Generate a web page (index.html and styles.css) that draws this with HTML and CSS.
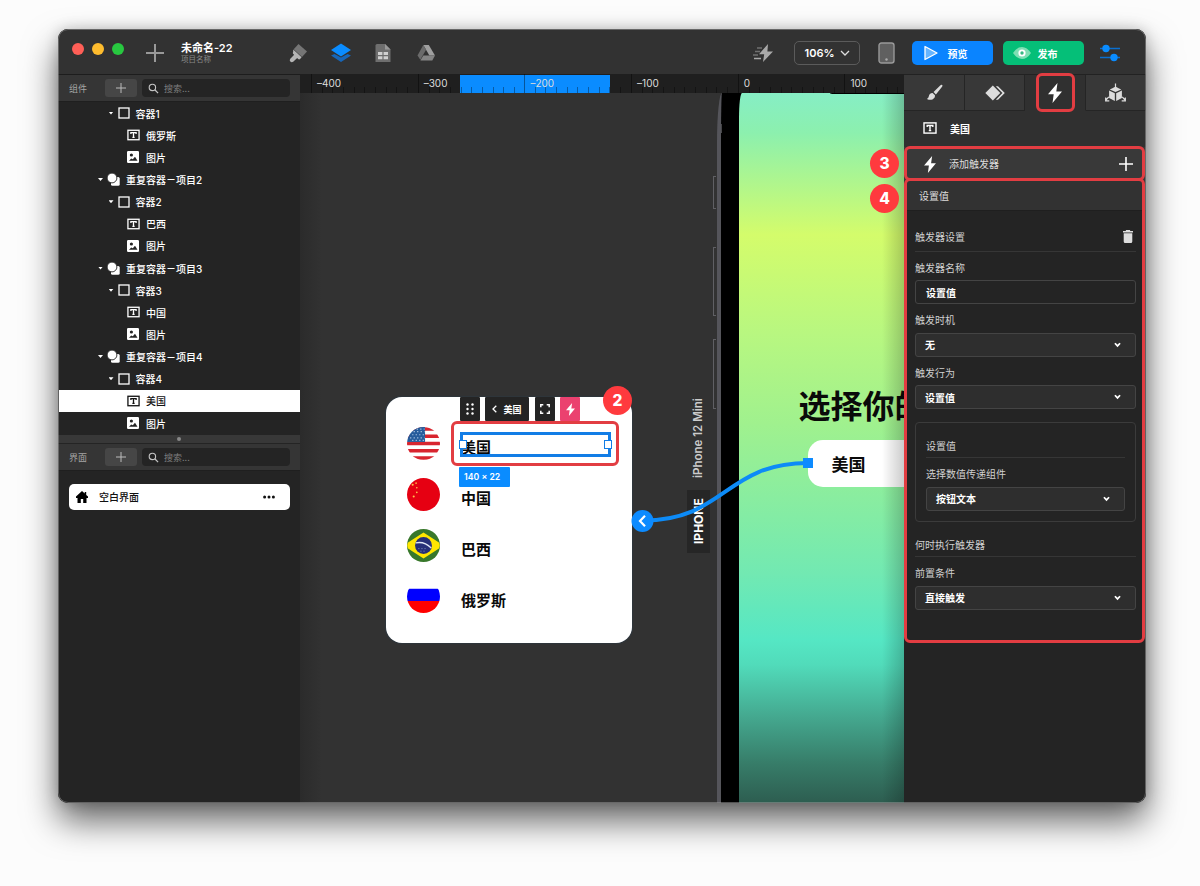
FILE: index.html
```html
<!DOCTYPE html>
<html lang="zh-CN">
<head>
    <meta charset="utf-8">
    <title>未命名-22</title>
    <link rel="stylesheet" href="styles.css">
</head>
<body>
<!-- shared icons -->
<svg class="sprite">
    <symbol id="i-box" viewBox="0 0 12 12"><rect x="1" y="1" width="10" height="10" fill="none" stroke="currentColor" stroke-width="1.3"/></symbol>
    <symbol id="i-text" viewBox="0 0 14 12"><rect x="1" y=".9" width="12" height="10.2" fill="none" stroke="currentColor" stroke-width="1.4"/><path d="M4.2 5V3.5h5.6V5M7 3.5v5M5.8 8.6h2.4" fill="none" stroke="currentColor" stroke-width="1.4"/></symbol>
    <symbol id="i-image" viewBox="0 0 12 12"><path fill="currentColor" fill-rule="evenodd" d="M1.2 0h9.6Q12 0 12 1.2v9.6Q12 12 10.8 12H1.2Q0 12 0 10.8V1.2Q0 0 1.2 0ZM4.4 2.4a1.6 1.6 0 1 0 0 3.2 1.6 1.6 0 0 0 0-3.2ZM2 9.7h8.5L8 5.7 5.8 8.2 4.2 7.4Z"/></symbol>
    <symbol id="i-repeat" viewBox="0 0 13 13"><path d="M9.5 4h1.7q1.5 0 1.5 1.5v5.7q0 1.5-1.5 1.5H5.5Q4 12.7 4 11.2V9.8" fill="currentColor"/><circle cx="5" cy="5" r="4.9" fill="currentColor" stroke="#242424" stroke-width=".9"/></symbol>
    <symbol id="i-search" viewBox="0 0 12 12"><circle cx="4.8" cy="4.8" r="3.5" fill="none" stroke="currentColor" stroke-width="1.2"/><path d="M7.4 7.4 11 11" stroke="currentColor" stroke-width="1.4"/></symbol>
    <symbol id="i-plus" viewBox="0 0 10 10"><path d="M5 0v10M0 5h10" stroke="currentColor"/></symbol>
    <symbol id="i-bolt" viewBox="0 0 14 20"><path d="M9.500 0 0 11.300h5.700L4.500 20 14 8.400H8.300Z" fill="currentColor"/></symbol>
    <symbol id="i-down" viewBox="0 0 6 5"><path d="m.8 1 2.200 2.300L5.200 1" fill="none" stroke="currentColor" stroke-width="1.500"/></symbol>
</svg>

<div class="window">
    <div class="titlebar">
        <div class="lights"><i class="red"></i><i class="yellow"></i><i class="green"></i></div>
        <svg class="new" width="18" height="18" viewBox="0 0 18 18"><path d="M9 0v18M0 9h18" stroke="#999" stroke-width="2"/></svg>
        <div class="project">
            <b>未命名-22</b>
            <span>项目名称</span>
        </div>
        <div class="tools">
            <svg width="20" height="20" viewBox="0 0 20 20"><path d="M10.500 1 19 8.500l-5 5.400-8.300-7.700Z" fill="#757575"/><path d="m5.300 6.500 8.300 7.700-1.500 1.800q-1 .8-2-.1l-.9-.9-4 3.800q-1.600 1-2.900-.2-1.200-1.400 0-2.900l3.900-3.900-1-.9q-.8-1-.1-1.900Z" fill="#b5b5b5"/></svg>
            <svg width="20" height="20" viewBox="0 0 20 20"><path d="M0 12.500 3.500 11 10 14.500 16.500 11 20 12.500 10 19Z" fill="#1766b8"/><path d="m10 .5 10 6.500-10 6.500L0 7Z" fill="#0a8cff"/></svg>
            <svg width="20" height="20" viewBox="0 0 20 20"><path d="M4 1h8l5.500 5.500V19H2.500V2.500Q2.500 1 4 1Z" fill="#6e6e6e"/><path d="M12 1v5.500h5.500Z" fill="#999"/><path d="M5 9h4.400v3H5zM10.600 9H15v3h-4.400zM5 13.200h4.400v3H5zM10.600 13.200H15v3h-4.400z" fill="#d0d0d0"/></svg>
            <svg width="20" height="20" viewBox="0 0 20 20"><path d="M7.300 2h5.500l6.200 10.600h-5.600Z" fill="#a0a0a0"/><path d="m7.300 2 2.800 4.800-5.800 10L1.500 12.500Z" fill="#6b6b6b"/><path d="M7.300 12.600H19L16.300 17.500H4.400Z" fill="#858585"/></svg>
        </div>
        <svg class="flash" width="22" height="20" viewBox="0 0 22 20"><path d="M16 1 7 11.300h5.200L11 19l10-10.600h-5.600Z" fill="#a9a9a9"/><path d="M5 5h5M3 8.500h5M1 12h5" stroke="#707070" stroke-width="1.500"/><path d="M2 15.500h7" stroke="#a9a9a9" stroke-width="1.500"/></svg>
        <div class="zoom">106% <svg width="10" height="6" viewBox="0 0 10 6"><path d="m1 1 4 4 4-4" fill="none" stroke="#ddd" stroke-width="1.300"/></svg></div>
        <svg class="device" width="17" height="22" viewBox="0 0 17 22"><rect x="1" y="1" width="15" height="20" rx="2.500" fill="#606060" stroke="#999" stroke-width="1.400"/><circle cx="8.500" cy="17.500" r="1.200" fill="#aaa"/></svg>
        <div class="btn preview"><svg width="14" height="16" viewBox="0 0 14 16"><path d="M1 1.500v13L13 8Z" fill="#66b5ff" stroke="#fff" stroke-width="1.300" stroke-linejoin="round"/></svg>预览</div>
        <div class="btn publish"><svg width="18" height="12" viewBox="0 0 18 12"><path d="M0 6Q4 0 9 0t9 6q-4 6-9 6T0 6Z" fill="#7edfb4"/><circle cx="9" cy="6" r="3.600" fill="#fff"/><circle cx="9" cy="6" r="1.700" fill="#35b982"/></svg>发布</div>
        <svg class="sliders" width="20" height="18" viewBox="0 0 20 18"><path d="M0 4.500h20M0 13.500h20" stroke="#0a6fd0" stroke-width="1.400"/><circle cx="6" cy="4.500" r="3.700" fill="#0a8cff"/><circle cx="14" cy="13.500" r="3.700" fill="#0a8cff"/></svg>
    </div>

    <div class="workspace">
        <div class="sidebar">
            <div class="side-head">
                <span>组件</span>
                <div class="add"><svg><use href="#i-plus"/></svg></div>
                <div class="search"><svg><use href="#i-search"/></svg>搜索...</div>
            </div>
            <div class="tree">
                <div class="row l2"><i class="caret"></i><svg class="box"><use href="#i-box"/></svg>容器1</div>
                <div class="row l3"><svg class="text"><use href="#i-text"/></svg>俄罗斯</div>
                <div class="row l3"><svg class="image"><use href="#i-image"/></svg>图片</div>
                <div class="row l1"><i class="caret"></i><svg class="repeat"><use href="#i-repeat"/></svg>重复容器<em>–</em>项目2</div>
                <div class="row l2"><i class="caret"></i><svg class="box"><use href="#i-box"/></svg>容器2</div>
                <div class="row l3"><svg class="text"><use href="#i-text"/></svg>巴西</div>
                <div class="row l3"><svg class="image"><use href="#i-image"/></svg>图片</div>
                <div class="row l1"><i class="caret"></i><svg class="repeat"><use href="#i-repeat"/></svg>重复容器<em>–</em>项目3</div>
                <div class="row l2"><i class="caret"></i><svg class="box"><use href="#i-box"/></svg>容器3</div>
                <div class="row l3"><svg class="text"><use href="#i-text"/></svg>中国</div>
                <div class="row l3"><svg class="image"><use href="#i-image"/></svg>图片</div>
                <div class="row l1"><i class="caret"></i><svg class="repeat"><use href="#i-repeat"/></svg>重复容器<em>–</em>项目4</div>
                <div class="row l2"><i class="caret"></i><svg class="box"><use href="#i-box"/></svg>容器4</div>
                <div class="row l3 selected"><svg class="text"><use href="#i-text"/></svg>美国</div>
                <div class="row l3"><svg class="image"><use href="#i-image"/></svg>图片</div>
            </div>
            <div class="splitter"><i></i></div>
            <div class="side-head">
                <span>界面</span>
                <div class="add"><svg><use href="#i-plus"/></svg></div>
                <div class="search"><svg><use href="#i-search"/></svg>搜索...</div>
            </div>
            <div class="screen-item">
                <svg width="12" height="12" viewBox="0 0 12 12"><path d="M6 0 0 5.500V7h1.500v5h3.300V8h2.400v4h3.300V7H12V5.500L10.200 3.900V1H8.700v1.500Z" fill="#000"/></svg>
                <span>空白界面</span>
                <svg width="12" height="4" viewBox="0 0 12 4"><g fill="#111"><circle cx="1.600" cy="2" r="1.500"/><circle cx="6" cy="2" r="1.500"/><circle cx="10.400" cy="2" r="1.500"/></g></svg>
            </div>
        </div>

        <div class="stage">
            <div class="ruler">
                <div class="range"></div>
                <div class="marks"><span>–400</span><span>–300</span><span>–200</span><span>–100</span><span>0</span><span>100</span></div>
            </div>
            <div class="canvas">
                <div class="phone">
                    <i class="band"></i>
                    <div class="screen">
                        <i class="notch"></i>
                        <h1>选择你的</h1>
                        <div class="phone-btn">美国</div>
                    </div>
                </div>
                <i class="key k1"></i><i class="key k2"></i><i class="key k3"></i>
                <div class="model">iPhone 12 Mini</div>
                <div class="tag">IPHONE</div>
                <div class="shade"></div>

                <div class="card">
                    <div class="country">
                        <svg class="flag" viewBox="0 0 32 32">
                            <clipPath id="round"><circle cx="16" cy="16" r="16"/></clipPath>
                            <g clip-path="url(#round)"><rect width="32" height="32" fill="#fff"/><path d="M0 2h32M0 9h32M0 16h32M0 23h32M0 30h32" stroke="#d8252f" stroke-width="3.500"/><rect width="17.500" height="14.500" fill="#265c9c"/><path d="M3 4.500h14M5 7.500h12M3 10.500h14M5 13h12M6 2h11" stroke="#a9c4e2" stroke-width="1.100" stroke-dasharray="1.200 2.200"/></g>
                        </svg><span>美国</span>
                    </div>
                    <div class="country">
                        <svg class="flag" viewBox="0 0 32 32"><circle cx="16" cy="16" r="16" fill="#e60012"/><g fill="#ffc34d"><circle cx="5.500" cy="6.500" r="1"/><circle cx="8.800" cy="5" r=".8"/><circle cx="9.500" cy="9.500" r=".8"/><circle cx="9.500" cy="14" r=".8"/><circle cx="6.500" cy="18" r="1"/></g></svg><span>中国</span>
                    </div>
                    <div class="country">
                        <svg class="flag" viewBox="0 0 32 32"><circle cx="16" cy="16" r="16" fill="#38782b"/><path d="M16 3.500 31 13q1.500 3 0 6L16 28.500 1 19q-1.500-3 0-6Z" fill="#ffe600"/><circle cx="16" cy="16" r="8.200" fill="#263078"/><path d="M8.500 13.500q8-2 15 5" fill="none" stroke="#dfe7f4" stroke-width="1.300"/><path d="M11 19h9M13 21.500h6" stroke="#8fa0cc" stroke-width=".8" stroke-dasharray="1 2"/></svg><span>巴西</span>
                    </div>
                    <div class="country">
                        <svg class="flag" viewBox="0 0 32 32"><g clip-path="url(#round)"><rect width="32" height="32" fill="#fff"/><rect y="8.500" width="32" height="12" fill="#00f"/><rect y="20.300" width="32" height="12" fill="#f00"/></g></svg><span>俄罗斯</span>
                    </div>
                </div>

                <!-- selection controls -->
                <div class="bar">
                    <div class="chip"><svg width="8" height="12" viewBox="0 0 8 12"><g fill="#fff"><circle cx="1.500" cy="1.500" r="1.200"/><circle cx="6.500" cy="1.500" r="1.200"/><circle cx="1.500" cy="6" r="1.200"/><circle cx="6.500" cy="6" r="1.200"/><circle cx="1.500" cy="10.500" r="1.200"/><circle cx="6.500" cy="10.500" r="1.200"/></g></svg></div>
                    <div class="chip name"><svg width="5" height="8" viewBox="0 0 5 8"><path d="M4.300.7 1 4l3.300 3.300" fill="none" stroke="#fff" stroke-width="1.300"/></svg>美国</div>
                    <div class="chip"><svg width="10" height="10" viewBox="0 0 10 10"><path d="M.8 3.300V.8h2.500M6.700.8h2.500v2.500M9.200 6.700v2.500H6.700M3.300 9.200H.8V6.700" fill="none" stroke="#fff" stroke-width="1.500"/></svg></div>
                    <div class="chip pink"><svg width="9" height="13"><use href="#i-bolt"/></svg></div>
                </div>
                <div class="selection"><i></i><i></i></div>
                <div class="size">140 × 22</div>
                <svg class="wire" width="190" height="96" viewBox="0 0 190 96">
                    <path d="M178 23C95 23 95 80.500 13 80.500" fill="none" stroke="#0d8bf7" stroke-width="4"/>
                    <rect x="173" y="18" width="10" height="10" fill="#0d8bff"/>
                    <circle cx="12.500" cy="81" r="11" fill="#0d8bff"/>
                    <path d="m15 75.800-5 5.200 5 5.200" fill="none" stroke="#fff" stroke-width="2.200"/>
                </svg>
                <div class="frame pick"></div>
                <div class="num n2">2</div>
                <div class="num n3">3</div>
                <div class="num n4">4</div>
            </div>
        </div>

        <div class="inspector">
            <div class="tabs">
                <div class="tab"><svg width="17" height="17" viewBox="0 0 18 18"><path d="M17 .8q.8.800.200 1.800L10.500 11 8 8.500l7.300-7.200q.900-.9 1.700-.5ZM7 9.500l2.500 2.500q.3 3-2.700 4.300Q4 17.300 1 15.800q1.800-.8 2-2.800.3-3.300 4-3.500Z" fill="#ddd"/></svg></div>
                <div class="tab"><svg width="20" height="16" viewBox="0 0 20 16"><path d="M7.800.5 15.300 8l-7.500 7.500L.3 8Z" fill="#ddd"/><path d="M10.800 1.200h2.200L19.800 8 13 14.800h-2.200L17.400 8Z" fill="#ddd"/></svg></div>
                <div class="tab active"><svg width="14" height="20"><use href="#i-bolt"/></svg><i class="frame"></i></div>
                <div class="tab"><svg width="21" height="20" viewBox="0 0 22 20"><path d="M11 3.500 17 6.300 11 9 5 6.300ZM4.300 7.500l6 2.800v8.200l-6-3.300ZM17.700 7.500l-6 2.800v8.200l6-3.300Z" fill="#ddd"/><path d="M11 0v6M9.200 4.500 11 6.500l1.800-2M4 14l-3.300 3.600m0-3v3.600h3.800M18 14l3.300 3.600m0-3v3.600h-3.800" fill="none" stroke="#ddd" stroke-width="1.300"/></svg></div>
            </div>
            <div class="target"><svg width="14" height="12"><use href="#i-text"/></svg>美国</div>
            <div class="trigger-add"><svg width="12" height="17"><use href="#i-bolt"/></svg><span>添加触发器</span><svg width="14" height="14" viewBox="0 0 14 14"><path d="M7 0v14M0 7h14" stroke="#fff" stroke-width="1.600"/></svg><i class="frame"></i></div>
            <div class="trigger">
                <i class="frame"></i>
                <div class="trigger-name">设置值</div>
                <div class="form">
                    <div class="section first">触发器设置<svg width="10" height="13" viewBox="0 0 10 13"><path d="M3.200 0h3.600l.6 1H10v1.500H0V1h2.600ZM.7 3.300h8.600v8.200q0 1.500-1.500 1.500H2.200Q.7 13 .7 11.500Z" fill="#ddd"/></svg></div>
                    <label>触发器名称</label>
                    <div class="input">设置值</div>
                    <label>触发时机</label>
                    <div class="select">无<svg><use href="#i-down"/></svg></div>
                    <label>触发行为</label>
                    <div class="select">设置值<svg><use href="#i-down"/></svg></div>
                    <div class="group">
                        <div class="section">设置值</div>
                        <label>选择数值传递组件</label>
                        <div class="select">按钮文本<svg><use href="#i-down"/></svg></div>
                    </div>
                    <div class="section">何时执行触发器</div>
                    <label>前置条件</label>
                    <div class="select">直接触发<svg><use href="#i-down"/></svg></div>
                </div>
            </div>
        </div>
    </div>
</div>
</body>
</html>
```

FILE: styles.css
```css
* {
    box-sizing: border-box;
}
body {
    margin: 0;
    height: 886px;
    overflow: hidden;
    background-color: #fcfcfc;
    font-family: Inter, "Noto Sans CJK SC", sans-serif;
    font-size: 10px;
    color: #fff;
}
svg {
    display: block;
    flex: none;
}
.sprite {
    position: absolute;
    width: 0;
    height: 0;
}
.window {
    position: relative;
    width: 1088px;
    height: 774px;
    margin: 29px 0 0 58px;
    border-radius: 10px;
    overflow: hidden;
    background-color: #242424;
    box-shadow: 0 18px 34px rgba(0, 0, 0, 0.6), 0 0 14px rgba(0, 0, 0, 0.18);
}
/* thin light edge over everything in the window */
.window::after {
    content: "";
    position: absolute;
    inset: 0;
    border: 1px solid rgba(150, 150, 150, 0.55);
    border-radius: 10px;
    pointer-events: none;
}

/* title bar */
.titlebar {
    display: flex;
    align-items: center;
    height: 45px;
    padding: 3px 0 0 14px;
    background-color: #323232;
}
.lights {
    display: flex;
    gap: 8px;
    margin-top: -8px;
}
.lights i {
    width: 12px;
    height: 12px;
    border-radius: 50%;
}
.red { background-color: #ff5f57; }
.yellow { background-color: #febc2e; }
.green { background-color: #28c840; }
.new {
    margin-left: 22px;
}
.project {
    width: 107px;
    margin: -2px 0 0 17px;
}
.project b {
    display: block;
    font-size: 11px;
    line-height: 14px;
    font-weight: 600;
}
.project span {
    display: block;
    margin-top: 1px;
    font-size: 7.5px;
    line-height: 8px;
    color: #8a8a8a;
}
.tools {
    display: flex;
    gap: 22.5px;
}
.flash {
    margin-left: 316px;
}
.zoom {
    display: flex;
    align-items: center;
    justify-content: space-between;
    width: 66px;
    height: 24px;
    margin-left: 20px;
    padding: 0 9px 0 10px;
    border: 1px solid #5b5b5b;
    border-radius: 5px;
    font-size: 11px;
    font-weight: 600;
}
.device {
    margin-left: 18px;
}
.btn {
    display: flex;
    align-items: center;
    height: 24px;
    width: 81px;
    border-radius: 5px;
    font-weight: 700;
}
.preview {
    gap: 10px;
    margin-left: 17px;
    padding-left: 12px;
    background-color: #0a84ff;
}
.publish {
    gap: 7px;
    margin-left: 10px;
    padding-left: 10px;
    background-color: #05bf78;
}
.sliders {
    margin-left: 16px;
}

.workspace {
    display: grid;
    grid-template-columns: 242px 604px 242px;
    height: 729px;
}

/* left side */
.sidebar {
    border-top: 1px solid #1d1d1d;
    background-color: #242424;
}
.side-head {
    display: flex;
    align-items: center;
    height: 27px;
    padding: 0 10px 0 11px;
    background-color: #353535;
    border-bottom: 1px solid #1f1f1f;
    font-size: 9px;
    color: #a5a5a5;
}
.side-head span {
    width: 36px;
}
.add {
    display: flex;
    align-items: center;
    justify-content: center;
    width: 32px;
    height: 18px;
    border-radius: 3px;
    background-color: #464646;
    color: #bbb;
}
.add svg {
    width: 10px;
    height: 10px;
}
.search {
    display: flex;
    align-items: center;
    flex: 1;
    gap: 5px;
    height: 18px;
    margin-left: 5px;
    padding-left: 6px;
    border-radius: 4px;
    background-color: #242424;
    color: #7d7d7d;
}
.search svg {
    width: 11px;
    height: 11px;
    color: #c4c4c4;
}
.tree {
    height: 333px;
}
.row {
    display: flex;
    align-items: center;
    height: 22.15px;
    margin-left: 1px;
    font-weight: 500;
}
.row svg {
    width: 12px;
    height: 12px;
    margin-right: 6px;
}
.row em {
    width: 10px;
    font-style: normal;
    text-align: center;
    transform: scaleX(1.4);
}
.l1 { padding-left: 39px; }
.l2 { padding-left: 49.5px; }
.l3 { padding-left: 68px; }
.row svg.repeat {
    width: 13px;
    height: 13px;
}
.row svg.text {
    width: 13px;
}
.l3 svg.image {
    margin-right: 7px;
}
.caret {
    width: 5px;
    height: 3px;
    margin-right: 4px;
    background-color: #fff;
    clip-path: polygon(0 0, 100% 0, 50% 100%);
}
.selected {
    background-color: #fff;
    color: #111;
}
.splitter {
    display: flex;
    align-items: center;
    justify-content: center;
    height: 9px;
    background-color: #383838;
    border-bottom: 1px solid #242424;
}
.splitter i {
    width: 4px;
    height: 4px;
    border-radius: 50%;
    background-color: #888;
}
.screen-item {
    display: flex;
    align-items: center;
    height: 26px;
    margin: 13px 10px 0 11px;
    padding: 0 15px 0 7px;
    border-radius: 5px;
    background-color: #fff;
    color: #111;
    font-weight: 500;
}
.screen-item span {
    flex: 1;
    margin: -1px 0 0 11px;
}

/* ruler */
.ruler {
    position: relative;
    height: 19px;
    overflow: hidden;
    background-color: #1f1f1f;
}
.range {
    position: absolute;
    left: 160px;
    top: 1px;
    width: 150px;
    height: 18px;
    background-color: #0a8cff;
}
.marks {
    position: relative;
    display: flex;
    margin-left: 11px;
}
.marks span {
    flex: none;
    width: 106.7px;
    height: 19px;
    padding-left: 5px;
    border-left: 1px solid rgba(0, 0, 0, 0.4);
    font-size: 10px;
    line-height: 18px;
    color: #ddd;
    background: repeating-linear-gradient(90deg, transparent 0 9.67px, rgba(0, 0, 0, 0.35) 9.67px 10.67px) 0 100% / 100% 6px no-repeat;
}

/* canvas */
.canvas {
    position: relative;
    height: 710px;
    background: linear-gradient(90deg, #2b2b2b, #323232 22px);
}
.phone {
    position: absolute;
    left: 417px;
    top: 0;
    right: 0;
    bottom: 0;
    overflow: hidden;
    padding-left: 17.6px;
    background-color: #000;
    border-left: 4px solid #55555b;
    border-top-left-radius: 5px 50px;
}
.band {
    position: absolute;
    left: -4px;
    top: 31px;
    width: 5px;
    height: 9px;
    background-color: #48484b;
}
.screen {
    position: relative;
    height: 710px;
    overflow: hidden;
    border-top-left-radius: 3px 25px;
    background: linear-gradient(#86eec5 0, #8cf0ae 40px, #d4fc6b 142px, #b8f780 240px, #a0f18e 330px, #72e9b2 480px, #55e7c4 547px, #51dbba 572px, #44a78e 625px, #377d69 670px, #2d5d50 710px);
}
.notch {
    position: absolute;
    right: 0;
    top: 0;
    width: 74px;
    height: 1px;
    background-color: #000;
    border-bottom-left-radius: 4px 1px;
}
.screen h1 {
    width: 140px;
    margin: 290px 0 0 60px;
    font-size: 32px;
    line-height: 48px;
    font-weight: 700;
    color: #0a0a0a;
}
.phone-btn {
    width: 180px;
    height: 47px;
    margin: 9px 0 0 69px;
    padding-left: 24px;
    border-radius: 15px;
    background-color: #fff;
    color: #0a0a0a;
    font-size: 17px;
    line-height: 50px;
    font-weight: 700;
}
.key {
    position: absolute;
    left: 413px;
    width: 3px;
    border: 1px solid #606064;
    border-right: 0;
}
.k1 { top: 83px; height: 33px; }
.k2 { top: 154px; height: 69px; }
.k3 { top: 246px; height: 70px; }
.model, .tag {
    position: absolute;
    left: 387px;
    width: 23px;
    writing-mode: vertical-rl;
    transform: rotate(180deg);
    line-height: 23px;
    text-align: center;
    white-space: nowrap;
}
.model {
    top: 300px;
    height: 90px;
    font-size: 11.5px;
    font-weight: 600;
    color: #ccc;
}
.tag {
    top: 397px;
    height: 63px;
    background-color: #262626;
    font-size: 12px;
    font-weight: 700;
}
.shade {
    position: absolute;
    right: 0;
    top: 0;
    width: 22px;
    height: 100%;
    background: linear-gradient(90deg, transparent, rgba(0, 0, 0, 0.2));
}
.card {
    position: absolute;
    left: 86px;
    top: 304px;
    width: 246px;
    height: 246px;
    padding: 30px 0 0 21px;
    border-radius: 16px;
    background-color: #fff;
    box-shadow: 0 0 2px #284056;
}
.country {
    display: flex;
    align-items: center;
    gap: 21px;
    height: 33px;
    margin-bottom: 18.1px;
    font-size: 15px;
    font-weight: 700;
    color: #0a0a0a;
}
.country span {
    padding-top: 5px;
}
.flag {
    width: 33px;
    height: 33px;
}
.bar {
    position: absolute;
    left: 159.5px;
    top: 304px;
    display: flex;
    gap: 5.5px;
}
.chip {
    display: flex;
    align-items: center;
    justify-content: center;
    width: 20px;
    height: 24px;
    background-color: #242424;
    border-radius: 1px;
}
.chip.name {
    gap: 6px;
    width: 44px;
    font-size: 9px;
    font-weight: 700;
}
.chip.pink {
    background-color: #eb416f;
}
.selection {
    position: absolute;
    left: 160px;
    top: 339px;
    display: flex;
    align-items: center;
    justify-content: space-between;
    width: 151px;
    height: 25px;
    border: 3px solid #127de6;
}
.selection i {
    width: 8px;
    height: 9px;
    margin: 0 -4px;
    border: 1px solid #127de6;
    background-color: #fff;
}
.size {
    position: absolute;
    left: 159px;
    top: 374px;
    width: 51px;
    height: 20px;
    padding-left: 5px;
    border-radius: 1px;
    background-color: #0a8cff;
    font-size: 8.7px;
    line-height: 20px;
    font-weight: 600;
}
.wire {
    position: absolute;
    left: 330px;
    top: 347px;
}

/* numbered callouts */
.frame {
    position: absolute;
    border: 3px solid #e23d42;
    border-radius: 6px;
    pointer-events: none;
}
.pick {
    left: 151px;
    top: 328px;
    width: 168px;
    height: 45px;
}
.num {
    position: absolute;
    width: 29px;
    height: 29px;
    border-radius: 50%;
    background-color: #ff3a3e;
    font-size: 15.5px;
    line-height: 29px;
    font-weight: 800;
    text-align: center;
}
.n2 { left: 303px; top: 293px; }
.n3 { left: 570px; top: 56px; }
.n4 { left: 570px; top: 91px; }

/* right side */
.inspector {
    border-top: 1px solid #222;
    background-color: #242424;
}
.tabs {
    display: flex;
    height: 36px;
    background-color: #303030;
}
.tab {
    position: relative;
    display: flex;
    flex: 1;
    align-items: center;
    justify-content: center;
    padding-left: 1px;
    border-right: 1px solid #252525;
    border-bottom: 1px solid #252525;
    background-color: #383838;
}
.tab.active {
    background-color: #303030;
    border-bottom-color: #303030;
}
.tab .frame {
    left: 11px;
    top: -2px;
    width: 39px;
    height: 39px;
}
.target {
    display: flex;
    align-items: center;
    gap: 13px;
    height: 36px;
    padding: 0 0 2px 19px;
    background-color: #303030;
    font-weight: 600;
}
.trigger-add {
    position: relative;
    display: flex;
    align-items: center;
    height: 34px;
    padding: 0 13px 0 20px;
    background-color: #393939;
    color: #fff;
}
.trigger-add span {
    flex: 1;
    margin: -2px 0 0 13px;
    color: #ddd;
}
.trigger-add .frame {
    left: 0;
    top: -1px;
    width: 241px;
    height: 35px;
}
.trigger {
    position: relative;
    height: 462px;
}
.trigger .frame {
    left: 0;
    top: -3px;
    width: 241px;
    height: 465px;
}
.trigger-name {
    height: 30px;
    padding-left: 15px;
    border-bottom: 1px solid #1f1f1f;
    background-color: #323232;
    line-height: 30px;
    color: #ddd;
}
.form {
    padding: 0 10px 0 11px;
}
.section {
    display: flex;
    align-items: center;
    justify-content: space-between;
    height: 35px;
    padding-top: 10px;
    border-bottom: 1px solid #363636;
    color: #d0d0d0;
}
.section.first {
    height: 41px;
    padding-right: 3px;
}
label {
    display: block;
    height: 28.4px;
    line-height: 32px;
    color: #d0d0d0;
}
.input, .select {
    display: flex;
    align-items: center;
    justify-content: space-between;
    height: 24px;
    padding: 0 14px 0 9px;
    border: 1px solid #444;
    border-radius: 3px;
    background-color: #2e2e2e;
    font-weight: 600;
}
.input {
    padding-left: 10px;
    background-color: #242424;
}
.select svg {
    width: 7px;
    height: 6px;
}
.group {
    height: 100px;
    margin-top: 13px;
    padding: 0 10px;
    border: 1px solid #3b3b3b;
    border-radius: 4px;
}
```
